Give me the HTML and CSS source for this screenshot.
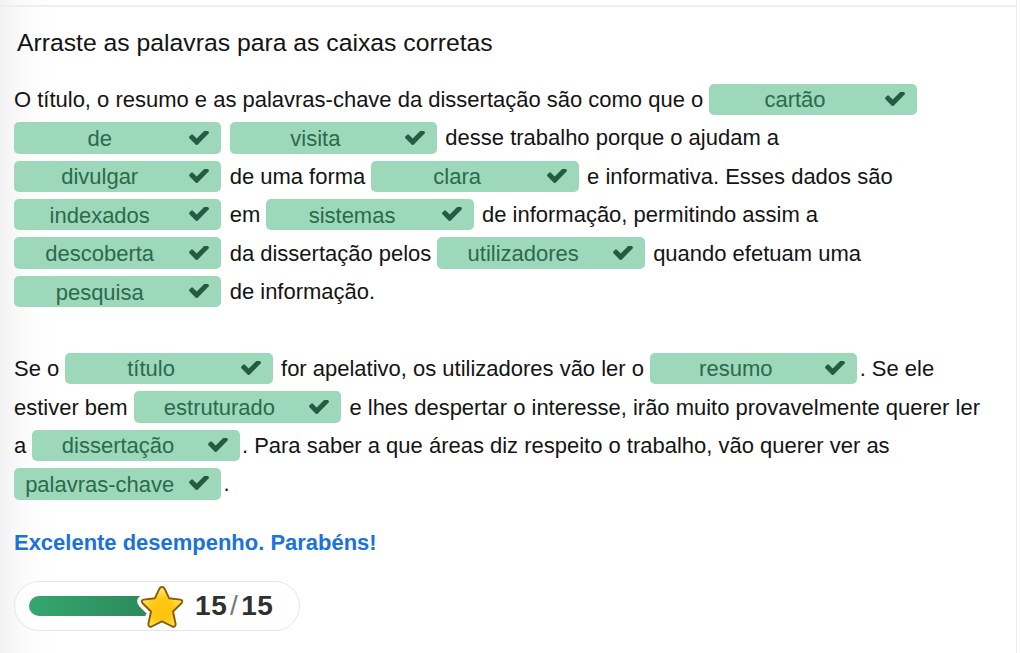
FILE: index.html
```html
<!DOCTYPE html>
<html lang="pt">
<head>
<meta charset="utf-8">
<title>Arraste as palavras</title>
<link rel="stylesheet" href="styles.css">
</head>
<body>
<svg class="defs" aria-hidden="true">
  <symbol id="check" viewBox="121 434 1550 1088"><path d="M1671 566q0 40-28 68l-724 724-136 136q-28 28-68 28t-68-28l-136-136-362-362q-28-28-28-68t28-68l136-136q28-28 68-28t68 28l294 295 656-657q28-28 68-28t68 28l136 136q28 28 28 68z"/></symbol>
</svg>
<main class="panel">
  <h1 class="title">Arraste as palavras para as caixas corretas</h1>
  <section class="text">
    <p class="line"><span>O título, o resumo e as palavras-chave da dissertação são como que o </span><span class="drop"><span class="word">cartão</span><svg class="tick"><use href="#check"/></svg></span></p>
    <p class="line"><span class="drop"><span class="word">de</span><svg class="tick"><use href="#check"/></svg></span><span> </span><span class="drop"><span class="word">visita</span><svg class="tick"><use href="#check"/></svg></span><span> desse trabalho porque o ajudam a</span></p>
    <p class="line"><span class="drop"><span class="word">divulgar</span><svg class="tick"><use href="#check"/></svg></span><span> de uma forma </span><span class="drop"><span class="word">clara</span><svg class="tick"><use href="#check"/></svg></span><span> e informativa. Esses dados são</span></p>
    <p class="line"><span class="drop"><span class="word">indexados</span><svg class="tick"><use href="#check"/></svg></span><span> em </span><span class="drop"><span class="word">sistemas</span><svg class="tick"><use href="#check"/></svg></span><span> de informação, permitindo assim a</span></p>
    <p class="line"><span class="drop"><span class="word">descoberta</span><svg class="tick"><use href="#check"/></svg></span><span> da dissertação pelos </span><span class="drop"><span class="word">utilizadores</span><svg class="tick"><use href="#check"/></svg></span><span> quando efetuam uma</span></p>
    <p class="line"><span class="drop"><span class="word">pesquisa</span><svg class="tick"><use href="#check"/></svg></span><span> de informação.</span></p>
    <p class="line"></p>
    <p class="line"><span>Se o </span><span class="drop"><span class="word">título</span><svg class="tick"><use href="#check"/></svg></span><span> for apelativo, os utilizadores vão ler o </span><span class="drop"><span class="word">resumo</span><svg class="tick"><use href="#check"/></svg></span><span>. Se ele</span></p>
    <p class="line"><span>estiver bem </span><span class="drop"><span class="word">estruturado</span><svg class="tick"><use href="#check"/></svg></span><span> e lhes despertar o interesse, irão muito provavelmente querer ler</span></p>
    <p class="line"><span>a </span><span class="drop"><span class="word">dissertação</span><svg class="tick"><use href="#check"/></svg></span><span>. Para saber a que áreas diz respeito o trabalho, vão querer ver as</span></p>
    <p class="line"><span class="drop"><span class="word">palavras-chave</span><svg class="tick"><use href="#check"/></svg></span><span>.</span></p>
  </section>
  <p class="feedback">Excelente desempenho. Parabéns!</p>
  <div class="score">
    <div class="bar"></div>
    <svg class="star" viewBox="0 0 52 52">
      <defs>
        <radialGradient id="gold" cx=".5" cy=".58" r=".5"><stop offset="0" stop-color="#ffc20a"/><stop offset=".55" stop-color="#ffc814"/><stop offset="1" stop-color="#ffe45a"/></radialGradient>
        <path id="shape" d="M26 7Q27.800 7 28.700 8.800L33 18.200L44.300 19.600Q47.700 20.400 45.400 23.200L37 31.500L39.600 43.800Q39.800 47.600 36.300 46.500L26 41.400L15.700 46.500Q12.200 47.600 12.400 43.800L15 31.500L6.600 23.200Q4.300 20.400 7.700 19.600L19 18.200L23.300 8.800Q24.200 7 26 7Z"/>
      </defs>
      <use href="#shape" class="halo"/>
      <use href="#shape" class="gold"/>
    </svg>
    <div class="points">15<span class="slash">/</span>15</div>
  </div>
</main>
</body>
</html>
```
FILE: styles.css
```css
* { box-sizing: border-box; }
body {
  margin: 0;
  background: #fff;
  color: #141414;
  font-family: "Liberation Sans", Arial, sans-serif;
}
.defs { display: none; }
.panel {
  width: 1017px;
  height: 653px;
  overflow: hidden;
  border-right: 1px solid #ececec;
  background:
    linear-gradient(#eee, #eee) 0 5px / 100% 2px no-repeat,
    linear-gradient(90deg, #f2f2f2 0, #f8f8f8 14px, #fdfdfd 34px, #fff 54px);
  padding: 28px 0 0 14px;
}
.title {
  margin: 0 0 0 3px;
  font-size: 24.74px;
  font-weight: 400;
  line-height: 30px;
  white-space: nowrap;
}
.text { margin-top: 22.2px; }
.line {
  display: flex;
  align-items: center;
  height: 38.45px;
  margin: 0;
  font-size: 21.99px;
  white-space: pre;
}
.line > span:not(.drop) { padding-top: 1.2px; }
.drop {
  display: flex;
  align-items: center;
  flex: none;
  width: 207.4px;
  height: 31.5px;
  margin-right: 2.2px;
  padding-right: 12px;
  border-radius: 5px;
  background: #9dd8bb;
}
.word { flex: 1; text-align: center; color: #2b6a4b; padding-top: 2px; }
.tick { width: 20px; height: 14px; margin: 0 0 .6px 4px; fill: #255c41; }
.feedback {
  margin: 25.8px 0 0;
  font-size: 21.97px;
  line-height: 28px;
  font-weight: 700;
  color: #1a73d9;
}
.score {
  display: flex;
  align-items: center;
  width: 286px;
  height: 50px;
  margin-top: 24px;
  padding-left: 14px;
  border: 1px solid #e6e6e6;
  border-radius: 25px;
  background: rgba(255, 255, 255, .5);
}
.bar {
  width: 118px;
  height: 20px;
  border-radius: 10px 0 0 10px;
  background: linear-gradient(90deg, #35a76e, #2c8a5b);
}
.star { width: 52px; height: 52px; margin-left: -11px; flex: none; clip-path: inset(3px 0); }
.halo { fill: #fff; stroke: #fff; stroke-width: 9; stroke-linejoin: round; }
.gold { fill: url(#gold); stroke: #8f5a08; stroke-width: 1.9; stroke-linejoin: round; }
.points {
  margin-left: 7px;
  font-size: 28px;
  font-weight: 700;
  letter-spacing: .6px;
  color: #303030;
}
.slash { margin: 0 2.7px; font-weight: 400; color: #777; }
```
